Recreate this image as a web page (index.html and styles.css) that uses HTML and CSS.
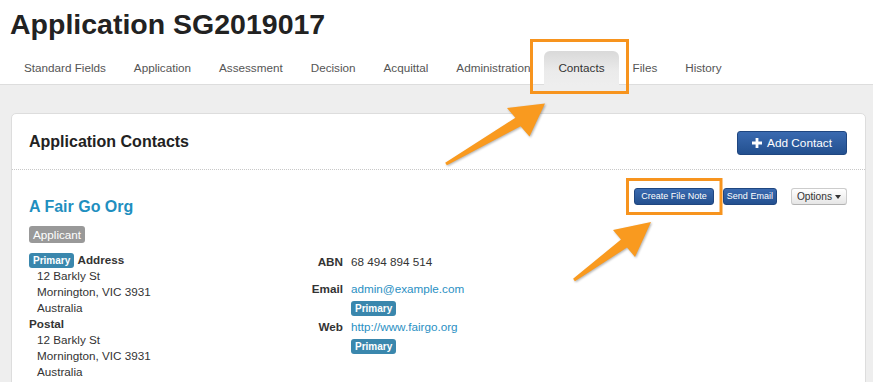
FILE: index.html
```html
<!DOCTYPE html>
<html lang="en">
<head>
<meta charset="utf-8">
<title>Application SG2019017</title>
<link rel="stylesheet" href="styles.css">
</head>
<body>
<header class="page-header">
  <h1 class="title">Application SG2019017</h1>
  <ul class="tabs">
    <li class="tab">Standard Fields</li>
    <li class="tab">Application</li>
    <li class="tab">Assessment</li>
    <li class="tab">Decision</li>
    <li class="tab">Acquittal</li>
    <li class="tab">Administration</li>
    <li class="tab tab-active">Contacts</li>
    <li class="tab">Files</li>
    <li class="tab">History</li>
  </ul>
</header>
<main class="main">
  <section class="card">
    <div class="card-head">
      <h2 class="card-title">Application Contacts</h2>
      <button class="btn btn-primary btn-add">
        <svg class="plus" width="10" height="10" viewBox="0 0 10 10"><path d="M3.6 0h2.8v3.6H10v2.8H6.4V10H3.6V6.4H0V3.6h3.6z" fill="#fff"/></svg>
        Add Contact
      </button>
    </div>
    <div class="contact">
      <div class="contact-top">
        <h3 class="org">A Fair Go Org</h3>
        <div class="actions">
          <button class="btn btn-primary btn-mini btn-note">Create File Note</button>
          <button class="btn btn-primary btn-mini btn-email">Send Email</button>
          <button class="btn btn-default btn-options">Options <span class="caret"></span></button>
        </div>
      </div>
      <div class="role"><span class="label label-gray">Applicant</span></div>
      <div class="details">
        <div class="addresses">
          <div class="addr-head"><span class="label label-info">Primary</span> <strong>Address</strong></div>
          <div class="addr-lines">12 Barkly St<br>Mornington, VIC 3931<br>Australia</div>
          <div class="addr-head"><strong>Postal</strong></div>
          <div class="addr-lines">12 Barkly St<br>Mornington, VIC 3931<br>Australia</div>
        </div>
        <dl class="info">
          <dt class="row-abn">ABN</dt>
          <dd class="row-abn">68 494 894 514</dd>
          <dt class="row-email">Email</dt>
          <dd class="row-email"><a class="link" href="#">admin@example.com</a><div class="tag-row"><span class="label label-info">Primary</span></div></dd>
          <dt>Web</dt>
          <dd><a class="link" href="#">http://www.fairgo.org</a><div class="tag-row"><span class="label label-info">Primary</span></div></dd>
        </dl>
      </div>
    </div>
  </section>
</main>
<svg class="overlay" width="873" height="382" viewBox="0 0 873 382">
  <rect x="531.5" y="40.5" width="96" height="52" fill="none" stroke="#f7941e" stroke-width="3"/>
  <rect x="627.5" y="179.5" width="93.5" height="34" fill="none" stroke="#f7941e" stroke-width="3"/>
  <g class="arrows">
    <polygon points="445.2,162.7 515.4,117.7 507,108 545,103.5 529.5,136.5 520.6,126.3 446.8,165.3" fill="#f99a1f"/>
    <polygon points="573.1,278.8 621,239.5 613,230 651,222 635,257 627,247.5 574.9,281.2" fill="#f99a1f"/>
  </g>
</svg>
</body>
</html>
```
FILE: styles.css
```css
* { box-sizing: border-box; }
html, body { margin: 0; overflow: hidden; }
body {
  font-family: "Liberation Sans", Arial, Helvetica, sans-serif;
  font-size: 11.7px;
  color: #333;
  background: #fff;
  width: 873px;
  height: 382px;
  position: relative;
}
.page-header { padding: 0 10px; }
.title {
  margin: 7px 0 0;
  font-size: 28.5px;
  line-height: 34px;
  font-weight: bold;
  color: #222;
}
.tabs {
  display: flex;
  list-style: none;
  margin: 10px 0 0;
  padding: 0;
  height: 33px;
}
.tab {
  padding: 0 14px;
  line-height: 33px;
  height: 33px;
  color: #555;
}
.tab-active {
  background: linear-gradient(#d9d9d9, #ebebeb 60%, #eee);
  border-radius: 6px 6px 0 0;
  color: #333;
  height: 34px;
  position: relative;
  z-index: 1;
}
.main {
  background: #eee;
  border-top: 1px solid #ddd;
  padding: 28px 7px 0 11px;
  height: 400px;
}
.card {
  background: #fff;
  border: 1px solid #ddd;
  border-radius: 5px;
  height: 380px;
}
.card-head {
  display: flex;
  align-items: center;
  justify-content: space-between;
  height: 56px;
  padding: 0 18px 0 17px;
  border-bottom: 1px dotted #c8c8c8;
}
.card-title {
  margin: 0;
  font-size: 16px;
  line-height: 20px;
  font-weight: bold;
  color: #222;
}
.btn {
  font-family: inherit;
  border-radius: 3px;
  cursor: pointer;
  display: inline-flex;
  align-items: center;
  justify-content: center;
  white-space: nowrap;
}
.btn-primary {
  color: #fff;
  background: linear-gradient(#3a6ab0, #23508f);
  border: 1px solid #1f4680;
}
.btn-add {
  margin-top: 3px;
  height: 24px;
  padding: 0 14px;
  font-size: 11.8px;
  gap: 5px;
}
.plus { display: block; }
.contact { padding: 18px 18px 20px 17px; }
.contact-top {
  display: flex;
  justify-content: space-between;
  align-items: flex-start;
}
.org {
  margin: 9px 0 0;
  font-size: 16px;
  line-height: 20px;
  font-weight: bold;
  color: #1f8fc0;
}
.actions { display: flex; align-items: center; }
.btn-mini {
  height: 17px;
  font-size: 9px;
  line-height: 15px;
  padding: 0 6px;
}
.btn-email { margin-left: 9px; padding: 0 3px; }
.btn-options {
  margin-left: 14px;
  height: 17px;
  font-size: 10.2px;
  padding: 0 5px;
  color: #333;
  background: linear-gradient(#fff, #e6e6e6);
  border: 1px solid #ccc;
  border-bottom-color: #b3b3b3;
  gap: 3px;
}
.caret {
  width: 0;
  height: 0;
  border-top: 4px solid #333;
  border-left: 3.5px solid transparent;
  border-right: 3.5px solid transparent;
  margin-top: 1px;
}
.role { display: flex; margin-top: 9px; }
.label {
  display: inline-block;
  color: #fff;
  border-radius: 3px;
}
.label-gray {
  background: #999;
  height: 17px;
  line-height: 17px;
  padding: 0 4px;
  font-size: 11.7px;
}
.label-info {
  background: #3a87ad;
  font-size: 10px;
  font-weight: bold;
  line-height: 11px;
  padding: 2px 4px;
  vertical-align: middle;
}
.details {
  display: flex;
  margin-top: 9px;
  line-height: 16px;
}
.addresses { width: 263px; }
.addr-head strong { font-weight: bold; color: #333; }
.addr-lines { padding-left: 8px; }
.info {
  margin: 0;
  padding-top: 2px;
  display: grid;
  grid-template-columns: 51px auto;
  column-gap: 8px;
  align-content: start;
}
.info dt {
  text-align: right;
  font-weight: bold;
  color: #333;
}
.info dd { margin: 0; }
.info .row-abn { margin-bottom: 11px; }
.info .row-email { margin-bottom: 3px; }
.tag-row { margin-top: 3px; height: 16px; }
.link { color: #2a90c3; text-decoration: none; }
.overlay {
  position: absolute;
  left: 0;
  top: 0;
  z-index: 10;
  pointer-events: none;
}
.arrows { filter: drop-shadow(1px 1px 1px rgba(0, 0, 0, 0.3)); }
```
